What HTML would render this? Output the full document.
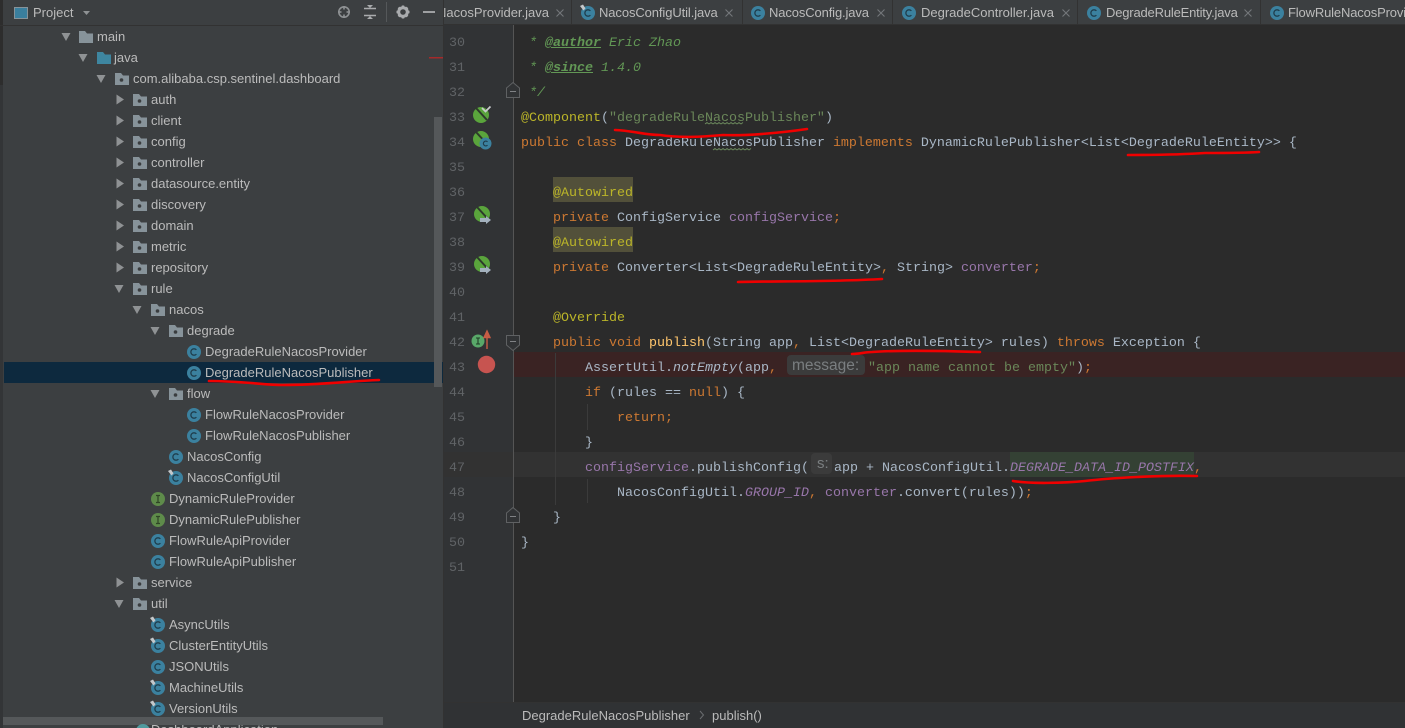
<!DOCTYPE html>
<html><head><meta charset="utf-8"><title>DegradeRuleNacosPublisher</title>
<style>
html,body{margin:0;padding:0;background:#2b2b2b;overflow:hidden}
#r{position:relative;width:1405px;height:728px;overflow:hidden;background:#2b2b2b}
.b{position:absolute}
.t{position:absolute;white-space:pre;font:13px/20px "Liberation Sans",sans-serif;color:#bbbbbb;margin-top:1px}
.c{position:absolute;left:521px;white-space:pre;font:13.333px/25px "Liberation Mono",monospace;color:#a9b7c6;margin-top:1px}
.n{position:absolute;left:449px;white-space:pre;font:13.333px/25px "Liberation Mono",monospace;color:#606366;margin-top:1px}
.k{color:#cc7832}.s{color:#6a8759}.a{color:#bbb529}.m{color:#9876aa}.d{color:#629755;font-style:italic}.f{color:#ffc66d}
.dt{font-weight:bold;text-decoration:underline}
.i{font-style:italic}
svg{position:absolute;left:0;top:0;overflow:visible}
</style></head><body><div id="r">

<!-- sidebar -->
<div class="b" style="left:0;top:0;width:444px;height:728px;background:#3c3f41"></div>
<div class="b" style="left:0;top:0;width:3px;height:728px;background:#333537"></div>
<div class="b" style="left:0;top:0;width:3px;height:85px;background:#2d2d2d"></div>
<div class="b" style="left:4px;top:362px;width:440px;height:21px;background:#0d293e"></div>
<div class="b" style="left:0;top:25px;width:444px;height:1px;background:#323232"></div>
<div class="b" style="left:434px;top:117px;width:8px;height:270px;background:#55585a"></div>
<div class="b" style="left:443px;top:0;width:1px;height:728px;background:#323232"></div>

<div class="t" style="left:33px;top:2px">Project</div>

<div class="t" style="left:97px;top:26px">main</div>
<div class="t" style="left:114px;top:47px">java</div>
<div class="t" style="left:133px;top:68px">com.alibaba.csp.sentinel.dashboard</div>
<div class="t" style="left:151px;top:89px">auth</div>
<div class="t" style="left:151px;top:110px">client</div>
<div class="t" style="left:151px;top:131px">config</div>
<div class="t" style="left:151px;top:152px">controller</div>
<div class="t" style="left:151px;top:173px">datasource.entity</div>
<div class="t" style="left:151px;top:194px">discovery</div>
<div class="t" style="left:151px;top:215px">domain</div>
<div class="t" style="left:151px;top:236px">metric</div>
<div class="t" style="left:151px;top:257px">repository</div>
<div class="t" style="left:151px;top:278px">rule</div>
<div class="t" style="left:169px;top:299px">nacos</div>
<div class="t" style="left:187px;top:320px">degrade</div>
<div class="t" style="left:205px;top:341px">DegradeRuleNacosProvider</div>
<div class="t" style="left:205px;top:362px">DegradeRuleNacosPublisher</div>
<div class="t" style="left:187px;top:383px">flow</div>
<div class="t" style="left:205px;top:404px">FlowRuleNacosProvider</div>
<div class="t" style="left:205px;top:425px">FlowRuleNacosPublisher</div>
<div class="t" style="left:187px;top:446px">NacosConfig</div>
<div class="t" style="left:187px;top:467px">NacosConfigUtil</div>
<div class="t" style="left:169px;top:488px">DynamicRuleProvider</div>
<div class="t" style="left:169px;top:509px">DynamicRulePublisher</div>
<div class="t" style="left:169px;top:530px">FlowRuleApiProvider</div>
<div class="t" style="left:169px;top:551px">FlowRuleApiPublisher</div>
<div class="t" style="left:151px;top:572px">service</div>
<div class="t" style="left:151px;top:593px">util</div>
<div class="t" style="left:169px;top:614px">AsyncUtils</div>
<div class="t" style="left:169px;top:635px">ClusterEntityUtils</div>
<div class="t" style="left:169px;top:656px">JSONUtils</div>
<div class="t" style="left:169px;top:677px">MachineUtils</div>
<div class="t" style="left:169px;top:698px">VersionUtils</div>
<div class="t" style="left:151px;top:719px">DashboardApplication</div>
<div class="b" style="left:3px;top:717px;width:380px;height:8px;background:#55585a"></div>

<!-- tabs -->
<div class="b" style="left:444px;top:0;width:961px;height:25px;background:#3c3f41;overflow:hidden">
<div class="t" style="left:-7px;top:2px">NacosProvider.java</div>
<div class="t" style="left:155px;top:2px;letter-spacing:-.1px">NacosConfigUtil.java</div>
<div class="t" style="left:325px;top:2px;letter-spacing:-.125px">NacosConfig.java</div>
<div class="t" style="left:477px;top:2px">DegradeController.java</div>
<div class="t" style="left:662px;top:2px;letter-spacing:-.18px">DegradeRuleEntity.java</div>
<div class="t" style="left:844px;top:2px;letter-spacing:-.15px">FlowRuleNacosProvider.java</div>
</div>
<div class="b" style="left:444px;top:24px;width:961px;height:1px;background:#323232"></div>

<!-- editor -->
<div class="b" style="left:444px;top:25px;width:69px;height:677px;background:#313335"></div>
<div class="b" style="left:514px;top:352px;width:891px;height:25px;background:#3a2323"></div>
<div class="b" style="left:444px;top:452px;width:961px;height:25px;background:#323232"></div>
<div class="b" style="left:513px;top:25px;width:1px;height:677px;background:#555555"></div>
<div class="b" style="left:553px;top:177px;width:80px;height:25px;background:#52503a"></div>
<div class="b" style="left:553px;top:227px;width:80px;height:25px;background:#52503a"></div>
<div class="b" style="left:1010px;top:452px;width:184px;height:25px;background:#344134"></div>
<div class="b" style="left:787px;top:355px;width:78px;height:20px;background:#3b3b3b;border-radius:4px"></div>
<div class="b" style="left:811px;top:453px;width:21px;height:21px;background:#3b3b3b;border-radius:4px"></div>
<div class="b" style="left:555px;top:353px;width:1px;height:152px;background:#3b3b3b"></div>
<div class="b" style="left:587px;top:404px;width:1px;height:26px;background:#3b3b3b"></div>
<div class="b" style="left:587px;top:479px;width:1px;height:24px;background:#3b3b3b"></div>

<div class="n" style="top:30px">30</div><div class="n" style="top:55px">31</div><div class="n" style="top:80px">32</div><div class="n" style="top:105px">33</div><div class="n" style="top:130px">34</div><div class="n" style="top:155px">35</div><div class="n" style="top:180px">36</div><div class="n" style="top:205px">37</div><div class="n" style="top:230px">38</div><div class="n" style="top:255px">39</div><div class="n" style="top:280px">40</div><div class="n" style="top:305px">41</div><div class="n" style="top:330px">42</div><div class="n" style="top:355px">43</div><div class="n" style="top:380px">44</div><div class="n" style="top:405px">45</div><div class="n" style="top:430px">46</div><div class="n" style="top:455px">47</div><div class="n" style="top:480px">48</div><div class="n" style="top:505px">49</div><div class="n" style="top:530px">50</div><div class="n" style="top:555px">51</div>

<div class="c d" style="top:30px"> * <span class="dt">@author</span> Eric Zhao</div>
<div class="c d" style="top:55px"> * <span class="dt">@since</span> 1.4.0</div>
<div class="c d" style="top:80px"> */</div>
<div class="c" style="top:105px"><span class="a">@Component</span>(<span class="s">"degradeRuleNacosPublisher"</span>)</div>
<div class="c" style="top:130px"><span class="k">public class</span> DegradeRuleNacosPublisher <span class="k">implements</span> DynamicRulePublisher&lt;List&lt;DegradeRuleEntity&gt;&gt; {</div>
<div class="c a" style="top:180px">    @Autowired</div>
<div class="c" style="top:205px">    <span class="k">private</span> ConfigService <span class="m">configService</span><span class="k">;</span></div>
<div class="c a" style="top:230px">    @Autowired</div>
<div class="c" style="top:255px">    <span class="k">private</span> Converter&lt;List&lt;DegradeRuleEntity&gt;<span class="k">,</span> String&gt; <span class="m">converter</span><span class="k">;</span></div>
<div class="c a" style="top:305px">    @Override</div>
<div class="c" style="top:330px">    <span class="k">public void</span> <span class="f">publish</span>(String app<span class="k">,</span> List&lt;DegradeRuleEntity&gt; rules) <span class="k">throws</span> Exception {</div>
<div class="c" style="top:355px">        AssertUtil.<span class="i">notEmpty</span>(app<span class="k">,</span></div>
<div class="c" style="top:355px;left:868px"><span class="s">"app name cannot be empty"</span>)<span class="k">;</span></div>
<div class="c" style="top:380px">        <span class="k">if</span> (rules == <span class="k">null</span>) {</div>
<div class="c" style="top:405px">            <span class="k">return;</span></div>
<div class="c" style="top:430px">        }</div>
<div class="c" style="top:455px">        <span class="m">configService</span>.publishConfig(</div>
<div class="c" style="top:455px;left:834px">app + NacosConfigUtil.<span class="m i">DEGRADE_DATA_ID_POSTFIX</span><span class="k">,</span></div>
<div class="c" style="top:480px">            NacosConfigUtil.<span class="m i">GROUP_ID</span><span class="k">,</span> <span class="m">converter</span>.convert(rules))<span class="k">;</span></div>
<div class="c" style="top:505px">    }</div>
<div class="c" style="top:530px">}</div>

<div class="t" style="left:792px;top:355px;font-size:15.5px;color:#7a7e80">message:</div>
<div class="t" style="left:817px;top:453px;font-size:15px;color:#7a7e80">s:</div>

<!-- breadcrumb -->
<div class="b" style="left:444px;top:702px;width:961px;height:26px;background:#303234"></div>
<div class="b" style="left:444px;top:702px;width:961px;height:1px;background:#323232"></div>
<div class="t" style="left:522px;top:705px">DegradeRuleNacosPublisher</div>
<div class="t" style="left:712px;top:705px">publish()</div>

<svg width="1405" height="728" viewBox="0 0 1405 728">
<defs>
<g id="cl"><circle r="7" fill="#3b819f"/><path d="M2.400 -2.200A3.200 3.200 0 1 0 2.400 2.200" fill="none" stroke="#1f3d4c" stroke-width="1.300"/></g>
<g id="cp"><use href="#cl"/><path d="M-8 -7L-5 -8.500L-2.500 -4.500L-4.500 -2.500Z" fill="#c5c8ca"/></g>
<g id="ifc"><circle r="7" fill="#5e8b4a"/><path d="M-2 -3.500H2M-2 3.500H2M0 -3.500V3.500" stroke="#2f4526" stroke-width="1.200" fill="none"/></g>
<path id="ad" d="M-4.500 -4H4.500L0 4Z" fill="#8f9294"/>
<path id="ar" d="M-3.500 -5L4 0L-3.500 5Z" fill="#8f9294"/>
<path id="fo" d="M0 0H6L8 2.500H14V12H0Z" fill="#87939a"/>
<g id="pk"><path d="M0 0H6L8 2.500H14V12H0Z" fill="#87939a"/><circle cx="6.500" cy="7" r="1.800" fill="#3a3d3f"/></g>
<g id="leaf"><circle r="8" fill="#5aa53c"/><path d="M-5 -7L6 5" stroke="#2e3a2b" stroke-width="2"/></g>
<g id="x"><path d="M-3.500 -3.500L3.500 3.500M3.500 -3.500L-3.500 3.500" stroke="#74777a" stroke-width="1.100"/></g>
</defs>

<!-- header icons -->
<rect x="14.500" y="7.500" width="13" height="11" fill="#3a7f9e" stroke="#87939a"/>
<path d="M83 11H90L86.500 15Z" fill="#8f9294"/>
<circle cx="344" cy="12" r="5.200" fill="none" stroke="#8f9294" stroke-width="1.600"/>
<path d="M344 6V9.500M344 14.500V18M338 12H341.500M346.500 12H350" stroke="#8f9294" stroke-width="1.600"/>
<path d="M364 8.500H376M364 15.500H376" stroke="#a9abad" stroke-width="1.500"/>
<path d="M367 5H373L370 8ZM367 19H373L370 16Z" fill="#a9abad"/>
<rect x="386" y="2" width="1" height="20" fill="#55585a"/>
<circle cx="403" cy="12" r="4.300" fill="none" stroke="#a9abad" stroke-width="3"/>
<path d="M403 5.500V7.500M403 16.500V18.500M396.500 12H398.500M407.500 12H409.500M398.500 7.500L400 9M406 15L407.500 16.500M398.500 16.500L400 15M406 9L407.500 7.500" stroke="#a9abad" stroke-width="2.400"/>
<path d="M423 12H435" stroke="#a9abad" stroke-width="1.800"/>
<rect x="429" y="57" width="14" height="1.500" fill="#a52a2a"/>

<!-- tab icons & close -->
<use href="#x" x="560" y="13"/><rect x="571" y="0" width="1" height="24" fill="#323232"/>
<use href="#cp" x="588" y="13"/><use href="#x" x="729" y="13"/><rect x="742" y="0" width="1" height="24" fill="#323232"/>
<use href="#cl" x="758" y="13"/><use href="#x" x="881" y="13"/><rect x="892" y="0" width="1" height="24" fill="#323232"/>
<use href="#cl" x="909" y="13"/><use href="#x" x="1066" y="13"/><rect x="1077" y="0" width="1" height="24" fill="#323232"/>
<use href="#cl" x="1094" y="13"/><use href="#x" x="1248" y="13"/><rect x="1260" y="0" width="1" height="24" fill="#323232"/>
<use href="#cl" x="1277" y="13"/>

<!-- tree arrows -->
<use href="#ad" x="66" y="37"/><use href="#ad" x="83" y="58"/><use href="#ad" x="101" y="79"/>
<use href="#ar" x="120" y="99.500"/><use href="#ar" x="120" y="120.500"/><use href="#ar" x="120" y="141.500"/><use href="#ar" x="120" y="162.500"/><use href="#ar" x="120" y="183.500"/><use href="#ar" x="120" y="204.500"/><use href="#ar" x="120" y="225.500"/><use href="#ar" x="120" y="246.500"/><use href="#ar" x="120" y="267.500"/>
<use href="#ad" x="119" y="289"/><use href="#ad" x="137" y="310"/><use href="#ad" x="155" y="331"/><use href="#ad" x="155" y="394"/>
<use href="#ar" x="120" y="582.500"/><use href="#ad" x="119" y="604"/>

<!-- tree icons -->
<use href="#fo" x="79" y="31"/>
<path d="M97 52H103L105 54.500H111V64H97Z" fill="#3e86a0"/>
<use href="#pk" x="115" y="73"/>
<use href="#pk" x="133" y="94"/><use href="#pk" x="133" y="115"/><use href="#pk" x="133" y="136"/><use href="#pk" x="133" y="157"/><use href="#pk" x="133" y="178"/><use href="#pk" x="133" y="199"/><use href="#pk" x="133" y="220"/><use href="#pk" x="133" y="241"/><use href="#pk" x="133" y="262"/><use href="#pk" x="133" y="283"/>
<use href="#pk" x="151" y="304"/><use href="#pk" x="169" y="325"/><use href="#pk" x="169" y="388"/>
<use href="#pk" x="133" y="577"/><use href="#pk" x="133" y="598"/>
<use href="#cl" x="194" y="352"/><use href="#cl" x="194" y="373"/><use href="#cl" x="194" y="415"/><use href="#cl" x="194" y="436"/>
<use href="#cl" x="176" y="457"/><use href="#cp" x="176" y="478"/>
<use href="#ifc" x="158" y="499"/><use href="#ifc" x="158" y="520"/>
<use href="#cl" x="158" y="541"/><use href="#cl" x="158" y="562"/>
<use href="#cp" x="158" y="625"/><use href="#cp" x="158" y="646"/><use href="#cl" x="158" y="667"/><use href="#cp" x="158" y="688"/><use href="#cp" x="158" y="709"/>
<circle cx="143" cy="731" r="7" fill="#4f9a9e"/>

<!-- gutter icons -->
<g transform="translate(481,115)"><use href="#leaf"/><path d="M1 -7L4.500 -3.500L9.500 -8.500" fill="none" stroke="#c9cbcd" stroke-width="1.700"/></g>
<g transform="translate(481,139)"><use href="#leaf"/><circle cx="4.500" cy="4.500" r="6" fill="#3b819f"/><path d="M6.500 2.800A2.400 2.400 0 1 0 6.500 6.200" fill="none" stroke="#1f3d4c" stroke-width="1.200"/></g>
<g transform="translate(482,214)"><use href="#leaf"/><path d="M-2 4H4V2L9 6L4 10V8H-2Z" fill="#a3b1bd"/></g>
<g transform="translate(482,264)"><use href="#leaf"/><path d="M-2 4H4V2L9 6L4 10V8H-2Z" fill="#a3b1bd"/></g>
<circle cx="478" cy="341" r="6.500" fill="#59a869"/><path d="M476 338H480M476 344H480M478 338V344" stroke="#1f3b25" stroke-width="1.100"/>
<path d="M487 349V335M484 337.500L487 331L490 337.500Z" stroke="#c75d45" stroke-width="1.400" fill="#c75d45"/>
<circle cx="486.500" cy="364.500" r="8.700" fill="#c75450"/>

<!-- fold markers -->
<path d="M506.500 97.500V88L513 82.500L519.500 88V97.500Z" fill="#313335" stroke="#5f6163"/><path d="M510 91.500H516" stroke="#808285"/>
<path d="M506.500 335.500V345L513 350.500L519.500 345V335.500Z" fill="#313335" stroke="#5f6163"/><path d="M510 341.500H516" stroke="#808285"/>
<path d="M506.500 522.500V513L513 507.500L519.500 513V522.500Z" fill="#313335" stroke="#5f6163"/><path d="M510 516.500H516" stroke="#808285"/>

<!-- squiggles & breadcrumb chevron -->
<path d="M705 124l2 -1.500l2 1.500l2 -1.500l2 1.500l2 -1.500l2 1.500l2 -1.500l2 1.500l2 -1.500l2 1.500l2 -1.500l2 1.500l2 -1.500l2 1.500l2 -1.500l2 1.500l2 -1.500l2 1.500l2 -1.500" fill="none" stroke="#6f8f5f" stroke-width="0.800"/>
<path d="M713 150l2 -1.500l2 1.500l2 -1.500l2 1.500l2 -1.500l2 1.500l2 -1.500l2 1.500l2 -1.500l2 1.500l2 -1.500l2 1.500l2 -1.500l2 1.500l2 -1.500l2 1.500l2 -1.500l2 1.500l2 -1.500" fill="none" stroke="#6f8f5f" stroke-width="0.800"/>
<path d="M700 711L703.500 715L700 719" fill="none" stroke="#6a6d70"/>

<!-- red annotations -->
<g fill="none" stroke="#f00000" stroke-width="2.600" stroke-linecap="round" stroke-linejoin="round">
<path d="M209 381C240 381 265 385 283 385C320 385 350 381 379 380"/>
<path d="M615 130C635 131 645 135 660 135C680 138 700 137 723 135C745 136 780 133 807 129"/>
<path d="M1128 155C1160 155 1190 154 1205 153C1225 153 1245 153 1259 152"/>
<path d="M738 282C770 281 830 282 882 279"/>
<path d="M852 354C860 354 865 352 872 352C900 350 950 351 980 352"/>
<path d="M1013 481C1030 484 1065 483 1085 481C1110 478 1160 475 1197 476"/>
</g>
</svg>
</div></body></html>
